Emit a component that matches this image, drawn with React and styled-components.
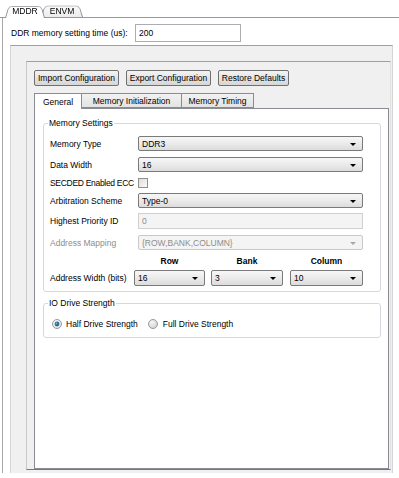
import React from 'react';
import styled, { createGlobalStyle } from 'styled-components';

const GlobalStyle = createGlobalStyle`
  html, body {
    margin: 0;
    padding: 0;
    background: #fff;
  }
  body {
    font-family: "Liberation Sans", Arial, sans-serif;
    font-size: 8.5px;
    color: #000;
  }
  * { box-sizing: border-box; }
`;

const Window = styled.div`
  width: 399px;
  height: 478px;
  background: #fff;
  overflow: hidden;
`;

const TabStrip = styled.div`
  display: flex;
  height: 18px;
  padding: 3px 0 0 5px;
  border-bottom: 1px solid #919b9c;
`;

const TopTab = styled.div`
  position: relative;
  width: ${(p) => p.$width}px;
  margin-left: ${(p) => (p.$first ? 0 : -4)}px;
  display: flex;
  align-items: center;
  justify-content: center;
  padding-top: 1px;
  z-index: ${(p) => (p.$active ? 2 : 1)};
  margin-bottom: ${(p) => (p.$active ? -1 : 0)}px;
  height: ${(p) => (p.$active ? 15 : 14)}px;
  align-self: flex-end;

  &::before {
    content: '';
    position: absolute;
    inset: 0;
    border: 1px solid #8a8f96;
    border-bottom: none;
    border-radius: 5px 5px 0 0;
    background: ${(p) => (p.$active ? '#fff' : 'linear-gradient(#fafafa, #ececec)')};
    transform: perspective(14px) rotateX(12deg);
    transform-origin: bottom;
    z-index: -1;
  }
`;

const TabBody = styled.div`
  margin-left: 2px;
  height: 455px;
  border-left: 1px solid #a8a8a8;
  display: flex;
  flex-direction: column;
`;

const TopRow = styled.div`
  display: flex;
  align-items: center;
  height: 18px;
  margin-top: 6px;
  padding-left: 8px;
`;

const TopLabel = styled.span`
  flex: 0 0 124px;
`;

const TextBox = styled.div`
  width: ${(p) => p.$width}px;
  height: ${(p) => p.$height || 18}px;
  border: 1px solid ${(p) => (p.$disabled ? '#d0d0d0' : '#abadb3')};
  background: ${(p) => (p.$disabled ? '#f4f4f4' : '#fff')};
  color: ${(p) => (p.$disabled ? '#8d8d8d' : '#000')};
  display: flex;
  align-items: center;
  padding-left: 3px;
`;

const OuterPane = styled.div`
  margin: 3px 0 0 7px;
  width: 383px;
  flex: 1;
  background: #f0f0f0;
  border-top: 1px solid #a0a0a0;
  border-left: 1px solid #d4d4d4;
  border-right: 1px solid #d4d4d4;
  padding: 15px 1px 3px 15px;
  display: flex;
  flex-direction: column;
`;

const InnerPane = styled.div`
  flex: 1;
  background: #f0f0f0;
  border-top: 1px solid #a0a0a0;
  border-left: 1px solid #c8c8c8;
  border-bottom: 1px solid #787878;
  border-right: 1px solid #e2e2e2;
  padding: 8px 2px 0 7px;
  display: flex;
  flex-direction: column;
`;

const ButtonRow = styled.div`
  display: flex;
  gap: 7px;
`;

const Button = styled.button`
  height: 16px;
  width: ${(p) => p.$width}px;
  padding: 0;
  font: inherit;
  border: 1px solid #707070;
  border-radius: 2px;
  background: linear-gradient(#f4f4f4, #e4e4e4 50%, #d6d6d6);
  color: #000;
`;

const TabRow = styled.div`
  display: flex;
  margin-top: 7px;
  height: 15px;
  align-items: flex-end;
`;

const PageTab = styled.div`
  width: ${(p) => p.$width}px;
  height: ${(p) => (p.$active ? 16 : 15)}px;
  margin-bottom: ${(p) => (p.$active ? -1 : 0)}px;
  border: 1px solid #898c95;
  border-bottom: ${(p) => (p.$active ? 'none' : '1px solid #898c95')};
  border-left: ${(p) => (p.$first || p.$active ? '1px solid #898c95' : 'none')};
  background: ${(p) => (p.$active ? '#fff' : 'linear-gradient(#f2f2f2, #e3e3e3)')};
  display: flex;
  align-items: center;
  justify-content: center;
  position: relative;
  z-index: ${(p) => (p.$active ? 2 : 1)};
`;

const TabContent = styled.div`
  flex: 1;
  width: 355px;
  background: #fff;
  border: 1px solid #898c95;
  padding: 14px 0 0 8px;
`;

const Group = styled.div`
  position: relative;
  width: 338px;
  border: 1px solid #d5d9dd;
  border-radius: 3px;
  margin-top: ${(p) => p.$top || 0}px;
  padding: ${(p) => p.$pad};
`;

const Legend = styled.span`
  position: absolute;
  top: -6px;
  left: 4px;
  line-height: 11px;
  padding: 0 1px;
  background: #fff;
`;

const FormRow = styled.div`
  display: flex;
  align-items: center;
  height: ${(p) => p.$height}px;
  margin-top: ${(p) => p.$top || 0}px;
`;

const FieldLabel = styled.span`
  flex: 0 0 ${(p) => p.$width || 88}px;
  color: ${(p) => (p.$disabled ? '#8d8d8d' : '#000')};
  letter-spacing: ${(p) => (p.$tight ? '-0.3px' : 'normal')};
  white-space: nowrap;
`;

const DropBox = styled.div`
  position: relative;
  width: ${(p) => p.$width}px;
  height: ${(p) => p.$height || 15}px;
  margin-left: ${(p) => p.$left || 0}px;
  border: 1px solid ${(p) => (p.$disabled ? '#c9c9c9' : '#7a7a7a')};
  border-radius: 2px;
  background: ${(p) =>
    p.$disabled ? '#f4f4f4' : 'linear-gradient(#f7f7f7, #ececec 45%, #dcdcdc)'};
  color: ${(p) => (p.$disabled ? '#8d8d8d' : '#000')};
  display: flex;
  align-items: center;
  padding-left: 3px;
`;

const Arrow = styled.span`
  position: absolute;
  right: 6px;
  top: 50%;
  margin-top: -1px;
  width: 0;
  height: 0;
  border-left: 3px solid transparent;
  border-right: 3px solid transparent;
  border-top: 3px solid ${(p) => (p.$disabled ? '#a8a8a8' : '#000')};
`;

const CheckBox = styled.div`
  width: 10px;
  height: 10px;
  border: 1px solid #8e8f8f;
  background: linear-gradient(135deg, #dcdcdc, #fbfbfb);
`;

const ColHead = styled.div`
  width: ${(p) => p.$width}px;
  margin-left: ${(p) => p.$left || 0}px;
  text-align: center;
  font-weight: bold;
`;

const RadioRow = styled.div`
  display: flex;
  align-items: center;
  height: 11px;
`;

const RadioItem = styled.label`
  display: flex;
  align-items: center;
  gap: ${(p) => p.$gap}px;
  margin-left: ${(p) => p.$left || 0}px;
`;

function Dropdown({ value, width, left, height, disabled }) {
  return (
    <DropBox $width={width} $left={left} $height={height} $disabled={disabled}>
      {value}
      <Arrow $disabled={disabled} />
    </DropBox>
  );
}

function Radio({ checked }) {
  const id = checked ? 'rOn' : 'rOff';
  return (
    <svg width="10" height="10" viewBox="0 0 10 10">
      <defs>
        <radialGradient id={id} cx="0.4" cy="0.35" r="0.7">
          <stop offset="0" stopColor={checked ? '#ffffff' : '#f6f6f6'} />
          <stop offset="1" stopColor={checked ? '#d8dde2' : '#cfcfcf'} />
        </radialGradient>
      </defs>
      <circle cx="5" cy="5" r="4.5" fill={`url(#${id})`} stroke="#9a9a9a" />
      {checked && <circle cx="5" cy="5" r="2.4" fill="#2a6f9a" />}
      {checked && <circle cx="4.4" cy="4.3" r="0.9" fill="#7fb6d8" />}
    </svg>
  );
}

export default function App() {
  return (
    <Window>
      <GlobalStyle />
      <TabStrip>
        <TopTab $first $active $width={40}>MDDR</TopTab>
        <TopTab $width={42}>ENVM</TopTab>
      </TabStrip>
      <TabBody>
        <TopRow>
          <TopLabel>DDR memory setting time (us):</TopLabel>
          <TextBox $width={106}>200</TextBox>
        </TopRow>
        <OuterPane>
          <InnerPane>
            <ButtonRow>
              <Button $width={85}>Import Configuration</Button>
              <Button $width={85}>Export Configuration</Button>
              <Button $width={71}>Restore Defaults</Button>
            </ButtonRow>
            <TabRow>
              <PageTab $first $active $width={48}>General</PageTab>
              <PageTab $width={100}>Memory Initialization</PageTab>
              <PageTab $width={72}>Memory Timing</PageTab>
            </TabRow>
            <TabContent>
              <Group $pad="12px 0 5px 6px">
                <Legend>Memory Settings</Legend>
                <FormRow $height={15}>
                  <FieldLabel>Memory Type</FieldLabel>
                  <Dropdown value="DDR3" width={225} />
                </FormRow>
                <FormRow $height={15} $top={6}>
                  <FieldLabel>Data Width</FieldLabel>
                  <Dropdown value="16" width={225} />
                </FormRow>
                <FormRow $height={11} $top={5}>
                  <FieldLabel $tight>SECDED Enabled ECC</FieldLabel>
                  <CheckBox />
                </FormRow>
                <FormRow $height={15} $top={5}>
                  <FieldLabel>Arbitration Scheme</FieldLabel>
                  <Dropdown value="Type-0" width={225} />
                </FormRow>
                <FormRow $height={16} $top={5}>
                  <FieldLabel>Highest Priority ID</FieldLabel>
                  <TextBox $width={225} $height={16} $disabled>0</TextBox>
                </FormRow>
                <FormRow $height={15} $top={6}>
                  <FieldLabel $disabled>Address Mapping</FieldLabel>
                  <Dropdown value="{ROW,BANK,COLUMN}" width={225} disabled />
                </FormRow>
                <FormRow $height={14} $top={4}>
                  <FieldLabel $width={84} />
                  <ColHead $width={71}>Row</ColHead>
                  <ColHead $width={72} $left={6}>Bank</ColHead>
                  <ColHead $width={73} $left={7}>Column</ColHead>
                </FormRow>
                <FormRow $height={16} $top={2}>
                  <FieldLabel $width={84}>Address Width (bits)</FieldLabel>
                  <Dropdown value="16" width={71} height={16} />
                  <Dropdown value="3" width={72} height={16} left={6} />
                  <Dropdown value="10" width={73} height={16} left={7} />
                </FormRow>
              </Group>
              <Group $top={11} $pad="14px 0 8px 8px">
                <Legend>IO Drive Strength</Legend>
                <RadioRow>
                  <RadioItem $gap={4}>
                    <Radio checked />
                    Half Drive Strength
                  </RadioItem>
                  <RadioItem $gap={5} $left={10}>
                    <Radio />
                    Full Drive Strength
                  </RadioItem>
                </RadioRow>
              </Group>
            </TabContent>
          </InnerPane>
        </OuterPane>
      </TabBody>
    </Window>
  );
}
